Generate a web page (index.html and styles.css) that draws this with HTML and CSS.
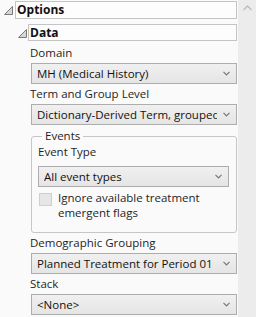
FILE: index.html
```html
<!DOCTYPE html>
<html lang="en">
<head>
    <meta charset="UTF-8">
    <title>Options</title>
    <link rel="stylesheet" href="styles.css">
</head>
<body>
    <div class="frame">
        <div class="panel">
            <div class="outline">
                <svg class="disclosure" width="9" height="9" viewBox="0 0 9 9"><polygon points="0.5,8.5 8.5,8.5 8.5,0.5" /></svg>
                <div class="title-box title-options">Options</div>
            </div>
            <div class="outline outline-data">
                <svg class="disclosure" width="9" height="9" viewBox="0 0 9 9"><polygon points="0.5,8.5 8.5,8.5 8.5,0.5" /></svg>
                <div class="title-box title-data">Data</div>
            </div>

            <div class="content">
                <div class="label">Domain</div>
                <div class="combo">
                    <span class="combo-text">MH (Medical History)</span>
                    <svg class="chev" width="7" height="5" viewBox="0 0 7 5"><polyline points="0.5,0.8 3.5,3.8 6.5,0.8" /></svg>
                </div>

                <div class="label">Term and Group Level</div>
                <div class="combo">
                    <span class="combo-text">Dictionary-Derived Term, grouped</span>
                    <svg class="chev" width="7" height="5" viewBox="0 0 7 5"><polyline points="0.5,0.8 3.5,3.8 6.5,0.8" /></svg>
                </div>

                <fieldset class="group">
                    <legend>Events</legend>
                    <div class="label">Event Type</div>
                    <div class="combo">
                        <span class="combo-text">All event types</span>
                        <svg class="chev" width="7" height="5" viewBox="0 0 7 5"><polyline points="0.5,0.8 3.5,3.8 6.5,0.8" /></svg>
                    </div>
                    <div class="check-row">
                        <span class="check"></span>
                        <span class="check-text">Ignore available treatment emergent flags</span>
                    </div>
                </fieldset>

                <div class="label label-after-group">Demographic Grouping</div>
                <div class="combo">
                    <span class="combo-text">Planned Treatment for Period 01</span>
                    <svg class="chev" width="7" height="5" viewBox="0 0 7 5"><polyline points="0.5,0.8 3.5,3.8 6.5,0.8" /></svg>
                </div>

                <div class="label">Stack</div>
                <div class="combo">
                    <span class="combo-text">&lt;None&gt;</span>
                    <svg class="chev" width="7" height="5" viewBox="0 0 7 5"><polyline points="0.5,0.8 3.5,3.8 6.5,0.8" /></svg>
                </div>
            </div>
        </div>
        <div class="scrollbar">
            <svg class="scroll-up" width="9" height="6" viewBox="0 0 9 6"><polyline points="0.5,5 4.5,1 8.5,5" /></svg>
        </div>
    </div>
</body>
</html>
```

FILE: styles.css
```css
* {
    box-sizing: border-box;
    margin: 0;
    padding: 0;
}
body {
    font-family: 'Open Sans', 'Noto Sans', sans-serif;
    font-size: 11.5px;
    line-height: 16px;
    color: #1e1e1e;
    background-color: #fafafa;
    width: 256px;
    height: 317px;
    overflow: hidden;
}
.frame {
    display: flex;
    height: 317px;
}
.panel {
    width: 238px;
    padding-top: 1px;
    padding-right: 1px;
}
.scrollbar {
    width: 18px;
    background-color: #ececec;
    display: flex;
    justify-content: center;
    padding-top: 5px;
}
.scroll-up polyline {
    fill: none;
    stroke: #bcbcbc;
    stroke-width: 1.3;
}
.outline {
    display: flex;
    align-items: center;
    padding-left: 4px;
}
.outline-data {
    margin-top: 5px;
    padding-left: 18px;
}
.disclosure {
    flex: none;
    margin-top: 1px;
}
.disclosure polygon {
    fill: #d6d6d6;
    stroke: #7a7a7a;
    stroke-width: 1;
}
.title-box {
    flex: 1;
    margin-left: 2px;
    background-color: #fdfdfd;
    border: 1px solid #c4c4c4;
    font-weight: bold;
    font-size: 12px;
    padding-left: 1px;
    color: #111;
}
.title-options {
    height: 18px;
    line-height: 15px;
}
.title-data {
    height: 17px;
    line-height: 15px;
    margin-left: 1px;
}
.content {
    padding-left: 30px;
    padding-top: 4px;
}
.label {
    height: 16px;
    line-height: 16px;
    margin-bottom: 2px;
}
.label-after-group {
    margin-top: 2px;
}
.combo {
    display: flex;
    align-items: center;
    height: 21px;
    margin-left: 1px;
    margin-bottom: 2px;
    border: 1px solid #adadad;
    background: linear-gradient(#f0f0f0, #e5e5e5);
    padding-left: 5px;
    padding-right: 6px;
}
.combo-text {
    flex: 1;
    white-space: nowrap;
    overflow: hidden;
    color: #111;
}
.chev {
    flex: none;
    margin-left: 6px;
}
.chev polyline {
    fill: none;
    stroke: #777;
    stroke-width: 1.2;
}
.group {
    margin: 3px 0 0 1px;
    border: 1px solid #c6c6c6;
    border-radius: 3px;
    padding: 0 7px 10px 6px;
    height: 105px;
}
.group legend {
    margin-left: 4px;
    padding: 0 3px;
    line-height: 16px;
}
.group .label {
    margin-bottom: 6px;
}
.group .combo {
    margin-left: 0;
}
.check-row {
    display: flex;
    align-items: flex-start;
    margin-top: 3px;
    line-height: 15px;
}
.check {
    flex: none;
    width: 13px;
    height: 13px;
    margin: 3px 6px 0 1px;
    border: 1px solid #cfcfcf;
    background-color: #e6e6e6;
}
.check-text {
    color: #1e1e1e;
}
```
